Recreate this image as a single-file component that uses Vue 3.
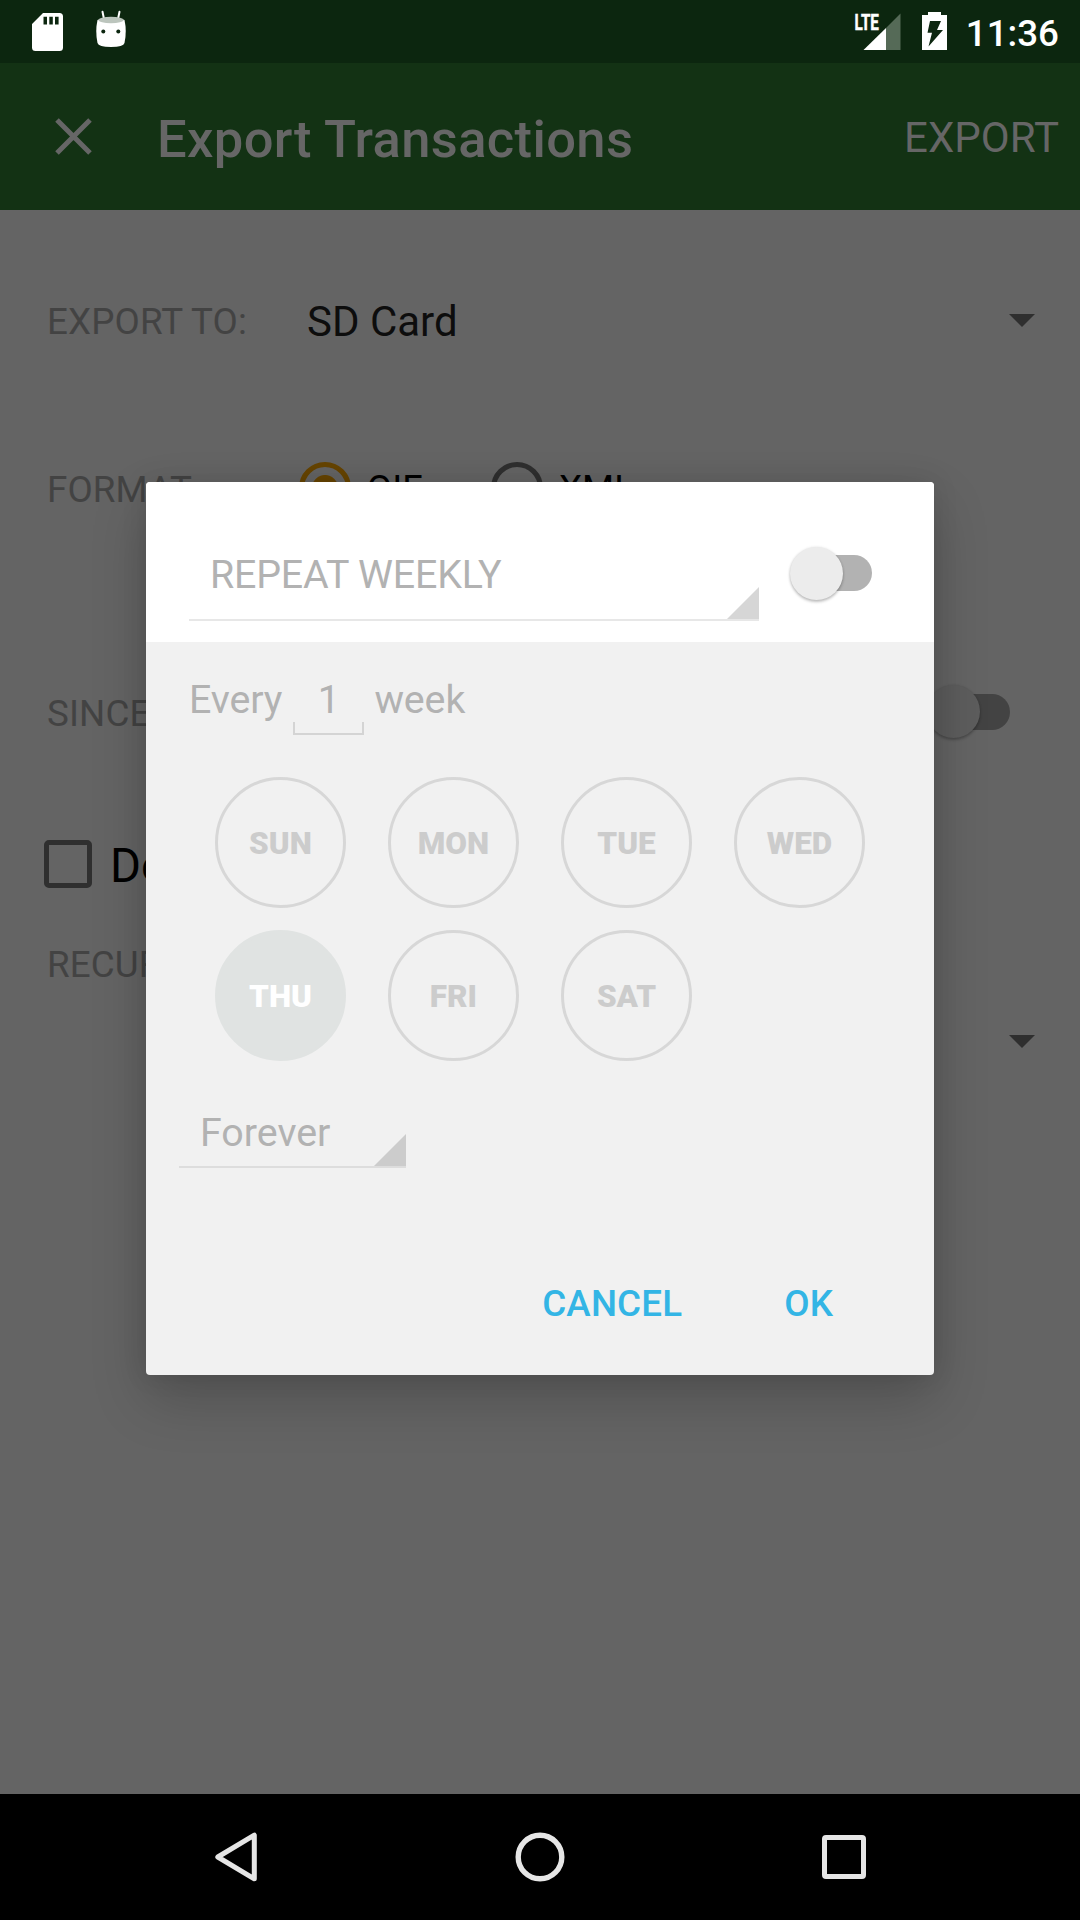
<script setup>
const days = [
  { name: 'SUN' }, { name: 'MON' }, { name: 'TUE' }, { name: 'WED' },
  { name: 'THU', on: true }, { name: 'FRI' }, { name: 'SAT' },
]
</script>

<template>
  <div class="screen">
    <header class="status">
      <svg class="sd" width="31" height="38" viewBox="0 0 31 38">
        <path fill="#fff" fill-rule="evenodd" d="M11 0H27.500Q31 0 31 3.500V34.500Q31 38 27.500 38H3.500Q0 38 0 34.500V11ZM11.500 3.700V11.500H15V3.700ZM17.300 3.700V11.500H20.800V3.700ZM23 3.700V11.500H26.600V3.700Z" />
      </svg>
      <svg class="droid" width="32" height="37" viewBox="0 0 32 37">
        <path d="M7.500.8 9 8M24.500.8 23 8" stroke="#fff" stroke-width="2" stroke-linecap="round" />
        <path fill="#fff" d="M2.500 9Q16 3.500 29.500 9Q32 20 29.500 32Q28.500 36 16 36Q3.500 36 2.500 32Q0 20 2.500 9Z" />
        <ellipse cx="16" cy="9" rx="12.600" ry="3.300" fill="#bcc5bd" />
        <circle cx="8.300" cy="20.600" r="2" fill="#0c260f" />
        <circle cx="23.300" cy="20.600" r="2" fill="#0c260f" />
      </svg>
      <span class="grow"></span>
      <svg class="signal" width="46" height="38" viewBox="0 0 46 38">
        <path fill="#556a57" d="M45.500 .5V37H31V15Z" />
        <path fill="#fff" d="M31 15V37H8.500Z" />
        <text x="-.6" y="16.600" class="lte" textLength="24.500" lengthAdjust="spacingAndGlyphs">LTE</text>
      </svg>
      <svg class="battery" width="25" height="38" viewBox="0 0 25 38">
        <path fill="#fff" d="M6 0H19V3H25V38H0V3H6Z" />
        <path fill="#0c260f" d="M8 9H19L15 18H21L6.500 34.500L10 20.800H5.500Z" />
      </svg>
      <span class="clock">11:36</span>
    </header>

    <div class="toolbar">
      <svg width="37" height="37" viewBox="0 0 37 37"><path d="M2 2 35 35M35 2 2 35" stroke="#666" stroke-width="5" /></svg>
      <span class="title">Export Transactions</span>
      <span class="export">EXPORT</span>
    </div>

    <main class="form">
      <div class="row to">
        <span class="label">EXPORT TO:</span>
        <span class="value">SD Card</span>
        <i class="caret"></i>
      </div>
      <div class="row format">
        <span class="label">FORMAT</span>
        <i class="radio checked"></i><span class="opt first">QIF</span>
        <i class="radio"></i><span class="opt">XML</span>
      </div>
      <div class="row since">
        <span class="label">SINCE:</span>
        <span class="switch dim"><i class="track"></i><i class="thumb"></i></span>
      </div>
      <div class="row delete"><i class="box"></i><span>Delete</span></div>
      <div class="row recur"><span class="label">RECURRENCE</span></div>
      <div class="row pick"><i class="caret"></i></div>
    </main>

    <nav class="nav">
      <span><svg width="50" height="54" viewBox="0 0 50 54"><path d="M43.300 5.200V48.800L6.800 27Z" fill="none" stroke="#e6e6e6" stroke-width="5" stroke-linejoin="round" /></svg></span>
      <span><svg width="50" height="50" viewBox="0 0 50 50"><circle cx="25" cy="25" r="21.800" fill="none" stroke="#e6e6e6" stroke-width="5.400" /></svg></span>
      <span><svg width="44" height="44" viewBox="0 0 44 44"><rect x="2.500" y="2.500" width="39" height="39" rx="1.500" fill="none" stroke="#e6e6e6" stroke-width="5" /></svg></span>
    </nav>

    <section class="dialog">
      <div class="head">
        <div class="spinner wide">
          <span>REPEAT WEEKLY</span>
          <svg width="32" height="32" viewBox="0 0 32 32"><path d="M32 0V32H0Z" fill="#d6d6d6" /></svg>
        </div>
        <span class="switch"><i class="track"></i><i class="thumb"></i></span>
      </div>
      <div class="every">
        <span>Every</span><span class="count">1</span><span>week</span>
      </div>
      <div class="days">
        <span v-for="d in days" :key="d.name" class="day" :class="{ on: d.on }">{{ d.name }}</span>
      </div>
      <div class="spinner until">
        <span>Forever</span>
        <svg width="32" height="32" viewBox="0 0 32 32"><path d="M32 0V32H0Z" fill="#ccc" /></svg>
      </div>
      <div class="actions"><span>CANCEL</span><span>OK</span></div>
    </section>
  </div>
</template>

<style>
body { margin: 0; background: #646464; }
</style>

<style scoped>
.screen {
  position: relative;
  width: 1080px;
  height: 1920px;
  overflow: hidden;
  display: flex;
  flex-direction: column;
  background: #646464;
  font-family: Roboto, "Liberation Sans", sans-serif;
  white-space: nowrap;
}
.screen * { box-sizing: border-box; }
svg { display: block; flex: none; overflow: visible; }
i { display: block; flex: none; }

.status {
  height: 63px;
  flex: none;
  display: flex;
  align-items: flex-start;
  background: #0c260f;
  padding: 0 21px 0 32px;
}
.sd { margin-top: 12.500px; }
.droid { margin: 11px 0 0 32px; }
.grow { flex: 1; }
.signal { margin: 12.500px 21px 0 0; }
.battery { margin: 12px 19px 0 0; }
.lte { font-size: 22.500px; font-weight: 700; fill: #fff; stroke: #fff; stroke-width: .5px; }
.clock { font-size: 36.750px; font-weight: 500; line-height: 68px; color: #fff; }

.toolbar {
  height: 147px;
  flex: none;
  display: flex;
  align-items: center;
  background: #133214;
  color: #666;
  padding: 0 21px 0 55px;
}
.title { flex: 1; margin-left: 65px; padding-top: 4px; font-size: 52.500px; font-weight: 500; letter-spacing: .36px; }
.export { padding-top: 2px; font-size: 42px; }

.form { flex: 1; }
.row { display: flex; align-items: center; padding-left: 47px; }
.label { width: 259px; font-size: 36.750px; letter-spacing: .12px; color: #434343; }
.to { height: 223px; padding-right: 45px; }
.value { flex: 1; padding-left: 1px; font-size: 42px; color: #0d0d0d; }
.caret {
  margin-left: auto;
  border: 13px solid transparent;
  border-top-color: #2f2f2f;
  border-bottom: 0;
}
.to .caret { margin-bottom: 2px; }
.format { height: 110px; }
.format .label { padding-top: 3px; }
.radio {
  width: 52px;
  height: 52px;
  margin-left: 65px;
  border: 5px solid #2f2f2f;
  border-radius: 50%;
}
.radio.checked {
  margin-left: -7px;
  border-color: #664400;
  background: radial-gradient(circle, #664400 12.500px, transparent 13.500px);
}
.opt { width: 91px; margin-left: 16px; padding-top: 1px; font-size: 36.750px; color: #000; }
.opt.first { width: 59px; }
.since { height: 134px; margin-top: 102px; padding-right: 70px; justify-content: space-between; }
.since .label { padding-top: 2px; }
.delete { height: 170px; padding-left: 44px; font-size: 47.250px; color: #000; }
.delete span { padding-top: 3px; margin-left: 18px; }
.box { width: 48px; height: 48px; border: 5.500px solid #2f2f2f; border-radius: 5px; }
.recur { height: 30px; }
.pick { height: 125px; padding-right: 45px; }

.switch { position: relative; display: block; flex: none; width: 83px; height: 54px; }
.track { width: 73px; height: 36px; margin: 9px 0 0 10px; border-radius: 18px; background: #b2b2b2; }
.thumb {
  position: absolute;
  left: 0;
  top: 0;
  width: 53px;
  height: 53px;
  border-radius: 50%;
  background: #ececec;
  box-shadow: 0 2px 3px rgba(0, 0, 0, .24), 0 0 3px rgba(0, 0, 0, .1);
}
.dim .track { background: #434343; }
.dim .thumb { background: #5d5d5d; }
.head .thumb { left: .5px; top: .5px; }

.nav { height: 126px; flex: none; display: flex; background: #000; padding: 0 84px; }
.nav span { flex: 1; display: flex; align-items: center; justify-content: center; }

.dialog {
  position: absolute;
  left: 146px;
  top: 482px;
  width: 788px;
  height: 893px;
  border-radius: 4px;
  overflow: hidden;
  display: flex;
  flex-direction: column;
  background: #f1f1f1;
  color: #b2b2b2;
  font-size: 39.375px;
  box-shadow: 0 24px 56px rgba(0, 0, 0, .2), 0 0 26px rgba(0, 0, 0, .1);
}
.head {
  height: 160px;
  flex: none;
  display: flex;
  background: #fff;
  padding: 0 62px 0 43px;
  justify-content: space-between;
}
.head .switch { margin-top: 64px; }
.spinner { display: flex; justify-content: space-between; align-items: flex-end; }
.wide { width: 570px; height: 139px; padding-left: 21px; border-bottom: 2px solid #e7e7e7; }
.wide span { line-height: 46px; padding-bottom: 21px; letter-spacing: -.2px; }
.every { display: flex; align-items: flex-start; height: 135px; padding: 35px 0 0 43px; line-height: 46px; letter-spacing: -.1px; }
.count {
  position: relative;
  width: 71px;
  height: 58px;
  margin: 0 10px 0 11px;
  text-align: center;
}
.count::after {
  content: "";
  position: absolute;
  left: 0;
  right: 0;
  bottom: 0;
  height: 11px;
  border: 2px solid #d4d4d4;
  border-top: 0;
}
.days { display: grid; grid-template-columns: repeat(4, 131px); gap: 22px 42px; padding-left: 69px; }
.day {
  height: 131px;
  border: 3px solid #d7d7d7;
  border-radius: 50%;
  text-align: center;
  line-height: 128px;
  font-size: 31.500px;
  font-weight: 900;
  color: #ccc;
}
.day.on { background: #e0e3e2; border-color: #e0e3e2; color: #fff; }
.until { width: 227px; height: 65px; margin: 42px 0 0 33px; padding-left: 21px; border-bottom: 2px solid #ddd; }
.until span { line-height: 46px; padding-bottom: 10px; }
.actions {
  display: flex;
  justify-content: flex-end;
  gap: 102px;
  margin-top: 114px;
  padding-right: 101px;
  font-size: 36.750px;
  line-height: 44px;
  font-weight: 500;
  letter-spacing: .15px;
  color: #33b5e5;
}
</style>
